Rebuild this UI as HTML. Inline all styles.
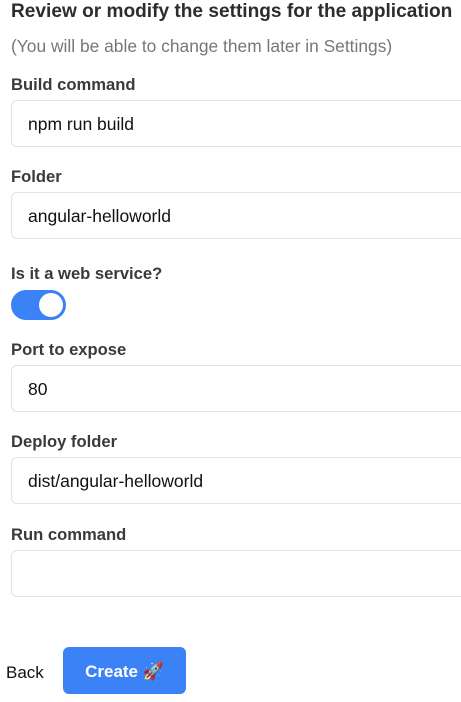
<!DOCTYPE html>
<html><head><style>
body{margin:0;width:461px;height:702px;overflow:hidden;background:#fff;font-family:"Liberation Sans",sans-serif;color:#333;position:relative}
.a{position:absolute;white-space:nowrap}
h1{position:absolute;left:11px;top:0;margin:0;font-size:19.1px;font-weight:bold;color:#2d2d2d;line-height:24px;white-space:nowrap}
.sub{left:11px;top:35px;font-size:17.4px;color:#777;line-height:22px}
.lab{left:11px;font-size:16.6px;font-weight:bold;color:#3a3a3a;line-height:22px}
.inp{position:absolute;left:11px;width:470px;height:47px;border:1px solid #e2e2e6;border-radius:6px;box-sizing:border-box;font-size:17.5px;color:#111;padding-left:16px;line-height:46px}
.tog{position:absolute;left:11px;top:290px;width:55px;height:30px;border-radius:15px;background:#3b82f6}
.tog i{position:absolute;right:3px;top:3px;width:24px;height:24px;border-radius:50%;background:#fff}
.btn{position:absolute;left:63px;top:647px;width:123px;height:47px;border-radius:6px;background:#3b82f6;color:#fff;font-weight:bold;font-size:17px;line-height:49px;text-align:center}
</style></head><body>
<h1>Review or modify the settings for the application</h1>
<div class="a sub">(You will be able to change them later in Settings)</div>
<div class="a lab" style="top:74px">Build command</div>
<div class="inp" style="top:100px">npm run build</div>
<div class="a lab" style="top:166px">Folder</div>
<div class="inp" style="top:192px">angular-helloworld</div>
<div class="a lab" style="top:263px">Is it a web service?</div>
<div class="tog"><i></i></div>
<div class="a lab" style="top:339px">Port to expose</div>
<div class="inp" style="top:365px">80</div>
<div class="a lab" style="top:431px">Deploy folder</div>
<div class="inp" style="top:457px">dist/angular-helloworld</div>
<div class="a lab" style="top:524px">Run command</div>
<div class="inp" style="top:550px"></div>
<div class="a" style="left:6px;top:662px;font-size:17px;color:#111;line-height:22px">Back</div>
<div class="btn">Create 🚀</div>
</body></html>
